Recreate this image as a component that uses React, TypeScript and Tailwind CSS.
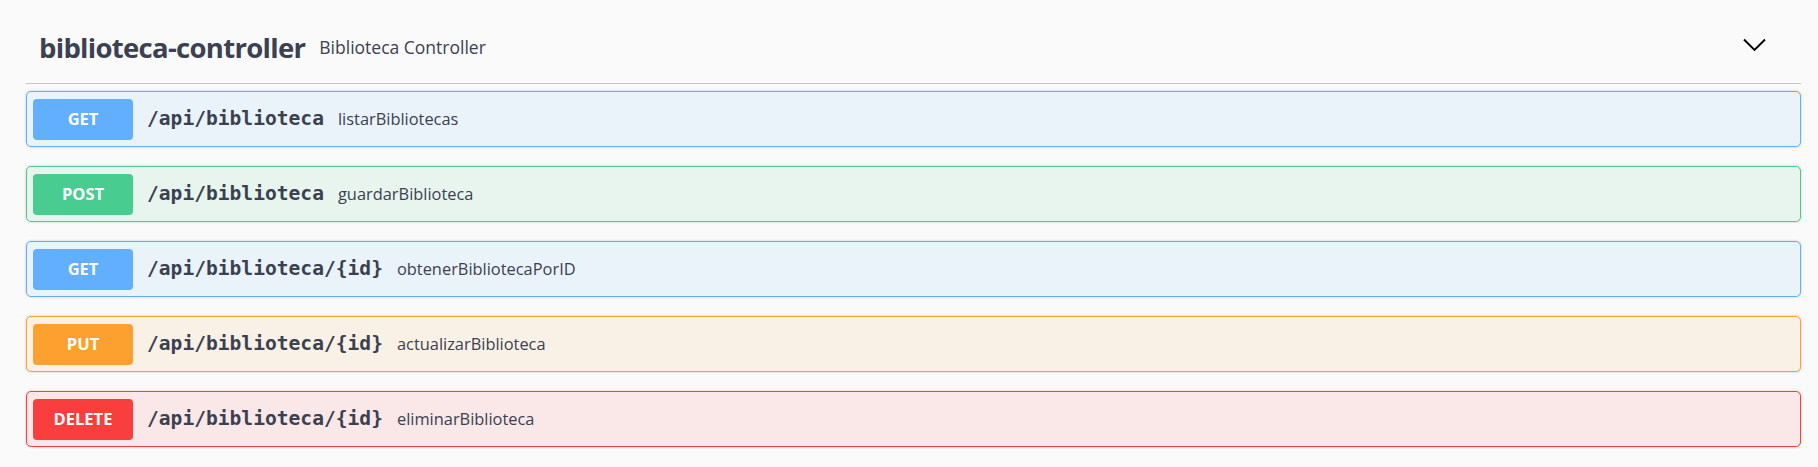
import React from "react";

type Op = {
  method: string;
  path: string;
  summary: string;
  badge: string;
  row: string;
};

const ops: Op[] = [
  {
    method: "GET",
    path: "/api/biblioteca",
    summary: "listarBibliotecas",
    badge: "bg-[#61affe]",
    row: "border-[#61affe] bg-[#ebf3fa]",
  },
  {
    method: "POST",
    path: "/api/biblioteca",
    summary: "guardarBiblioteca",
    badge: "bg-[#49cc90]",
    row: "border-[#49cc90] bg-[#e8f5ef]",
  },
  {
    method: "GET",
    path: "/api/biblioteca/{id}",
    summary: "obtenerBibliotecaPorID",
    badge: "bg-[#61affe]",
    row: "border-[#61affe] bg-[#ebf3fa]",
  },
  {
    method: "PUT",
    path: "/api/biblioteca/{id}",
    summary: "actualizarBiblioteca",
    badge: "bg-[#fca130]",
    row: "border-[#fca130] bg-[#faf1e6]",
  },
  {
    method: "DELETE",
    path: "/api/biblioteca/{id}",
    summary: "eliminarBiblioteca",
    badge: "bg-[#f93e3e]",
    row: "border-[#f93e3e] bg-[#fae7e7]",
  },
];

function OpRow({ op }: { op: Op }) {
  return (
    <div
      className={`mb-[19px] flex h-[56px] items-center rounded-[5px] border pl-[6px] shadow-[0_0_3px_rgba(0,0,0,0.19)] ${op.row}`}
    >
      <span
        className={`flex h-[41px] w-[100px] shrink-0 items-center justify-center rounded-[4px] font-['Open_Sans',sans-serif] text-[16.5px] font-bold text-white ${op.badge}`}
      >
        {op.method}
      </span>
      <span className="ml-[14px] font-['DejaVu_Sans_Mono',monospace] text-[19.6px] font-bold text-[#3b4151]">
        {op.path}
      </span>
      <span className="ml-[14px] font-['Open_Sans',sans-serif] text-[16.4px] text-[#3b4151]">
        {op.summary}
      </span>
    </div>
  );
}

export default function App() {
  return (
    <div className="min-h-screen bg-[#fafafa] pl-[26px] pr-[17px]">
      <div className="flex h-[84px] items-center border-b border-[#c4c6cb] pl-[13px] pr-[35px] pt-[13px]">
        <h3 className="font-['Open_Sans',sans-serif] text-[27.5px] font-bold leading-none tracking-[-0.7px] text-[#3b4151]">
          biblioteca-controller
        </h3>
        <span className="ml-[14px] font-['Open_Sans',sans-serif] text-[17.5px] leading-none text-[#3b4151]">
          Biblioteca Controller
        </span>
        <svg
          className="ml-auto -mt-[7px]"
          width="23"
          height="14"
          viewBox="0 0 23 14"
          fill="none"
          stroke="#000"
          strokeWidth="1.9"
        >
          <polyline points="1,1.5 11.5,12 22,1.5" />
        </svg>
      </div>
      <div className="pt-[7px]">
        {ops.map((op, i) => (
          <OpRow key={i} op={op} />
        ))}
      </div>
    </div>
  );
}
